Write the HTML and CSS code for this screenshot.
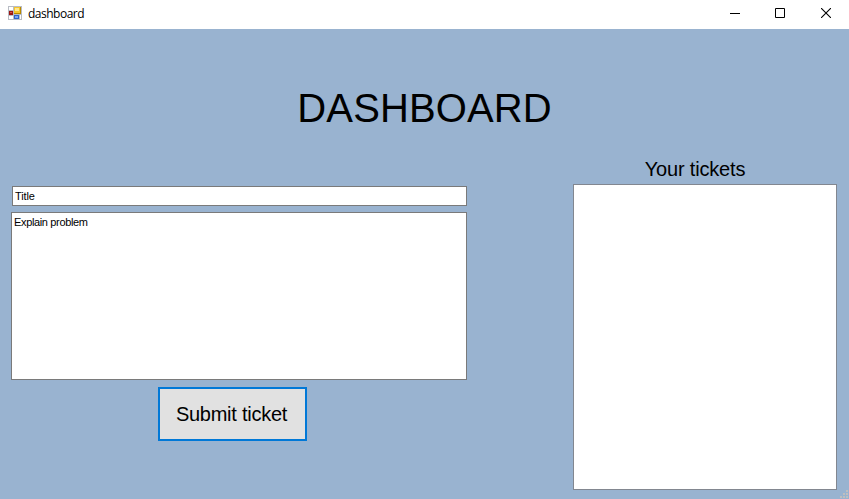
FILE: index.html
```
<!DOCTYPE html>
<html lang="en">
<head>
<meta charset="utf-8">
<title>dashboard</title>
<link rel="stylesheet" href="styles.css">
</head>
<body>
<div class="window">
  <header class="titlebar">
    <svg class="app-icon" width="14" height="14" viewBox="0 0 14 14" shape-rendering="crispEdges">
      <path fill="#b8bcc4" d="M0 0h14v14H0z"/>
      <path fill="#fff" d="M1 1h4v3H1zM1 10h4v3H1z"/>
      <path fill="#9b1512" d="M1 5h4v4H1z"/>
      <path fill="#d7564a" d="M2 6h2v1H2z"/>
      <path fill="#b98a00" d="M6 1h7v7H6z"/>
      <path fill="#f5c52c" d="M6 1h6v6H6z"/>
      <path fill="#ffe78f" d="M7 2h4v3H7z"/>
      <path fill="#2f62c8" d="M6 9h5v4H6z"/>
      <path fill="#75a5f5" d="M7 10h3v2H7z"/>
      <path fill="#fff" d="M12 9h1v4h-1z"/>
    </svg>
    <span class="caption">dashboard</span>
    <div class="controls">
      <svg width="10" height="10" viewBox="0 0 10 10"><path fill="#000" d="M0 5h10v1H0z"/></svg>
      <svg width="10" height="10" viewBox="0 0 10 10"><path fill="none" stroke="#000" d="M.5.5h9v9h-9z"/></svg>
      <svg class="close" width="10" height="10" viewBox="0 0 10 10"><path fill="none" stroke="#000" stroke-width="1.1" d="M0 0l10 10M10 0L0 10"/></svg>
    </div>
  </header>
  <main class="form">
    <h1 class="heading">DASHBOARD</h1>
    <div class="columns">
      <section class="compose">
        <div class="field title-field">Title</div>
        <div class="field problem-field">Explain problem</div>
        <button class="submit">Submit ticket</button>
      </section>
      <section class="tickets">
        <h2 class="tickets-label">Your tickets</h2>
        <div class="ticket-list"></div>
      </section>
    </div>
    <svg class="grip" width="8" height="8" viewBox="0 0 8 8" shape-rendering="crispEdges"><path fill="#bfbfbf" d="M6 0h2v2H6zM3 3h2v2H3zM6 3h2v2H6zM0 6h2v2H0zM3 6h2v2H3zM6 6h2v2H6z"/></svg>
  </main>
</div>
</body>
</html>
```
FILE: styles.css
```
* {
  box-sizing: border-box;
}

body {
  margin: 0;
  color: #000;
  font-family: "Liberation Sans", Arial, sans-serif;
}

.window {
  display: flex;
  flex-direction: column;
  height: 499px;
  overflow: hidden;
}

.titlebar {
  display: flex;
  align-items: center;
  height: 29px;
  padding: 0 18px 2px 8px;
  background: #fff;
}

.app-icon {
  margin-top: -1px;
}

.caption {
  margin-left: 6px;
  font: 12px/16px "Open Sans", "Noto Sans", sans-serif;
  letter-spacing: -0.5px;
}

.controls {
  display: flex;
  gap: 35px;
  margin: -1px 0 0 auto;
}

.controls svg {
  display: block;
}

.controls .close {
  margin-left: 1px;
}

.form {
  position: relative;
  flex: 1;
  padding: 56px 12px 0 11px;
  background: #99b3d0;
}

.heading {
  height: 46px;
  margin: 0 0 0 1px;
  font-size: 40px;
  font-weight: 400;
  line-height: 46px;
  letter-spacing: 0.1px;
  text-align: center;
}

.columns {
  display: flex;
  justify-content: space-between;
}

.compose {
  display: flex;
  flex-direction: column;
  width: 456px;
  padding-top: 55px;
}

.field {
  padding: 3px 2px;
  border: 1px solid #7a7a7a;
  background: #fff;
  font-size: 11px;
  line-height: 13px;
  letter-spacing: -0.35px;
}

.title-field {
  height: 20px;
  margin: 0 0 6px 1px;
  letter-spacing: -0.1px;
}

.problem-field {
  height: 168px;
}

.submit {
  align-self: center;
  width: 149px;
  height: 54px;
  margin: 7px 13px 0 0;
  padding: 0 2px 0 0;
  border: 2px solid #0078d7;
  background: #e1e1e1;
  color: #000;
  font: 20px/24px "Liberation Sans", Arial, sans-serif;
  letter-spacing: -0.25px;
}

.tickets {
  width: 264px;
  padding-top: 26px;
}

.tickets-label {
  height: 24px;
  margin: 0 20px 3px 0;
  font-size: 20px;
  font-weight: 400;
  line-height: 24px;
  letter-spacing: -0.17px;
  text-align: center;
}

.ticket-list {
  height: 306px;
  border: 1px solid #828790;
  background: #fff;
}

.grip {
  position: absolute;
  right: 1px;
  bottom: 1px;
}
```
